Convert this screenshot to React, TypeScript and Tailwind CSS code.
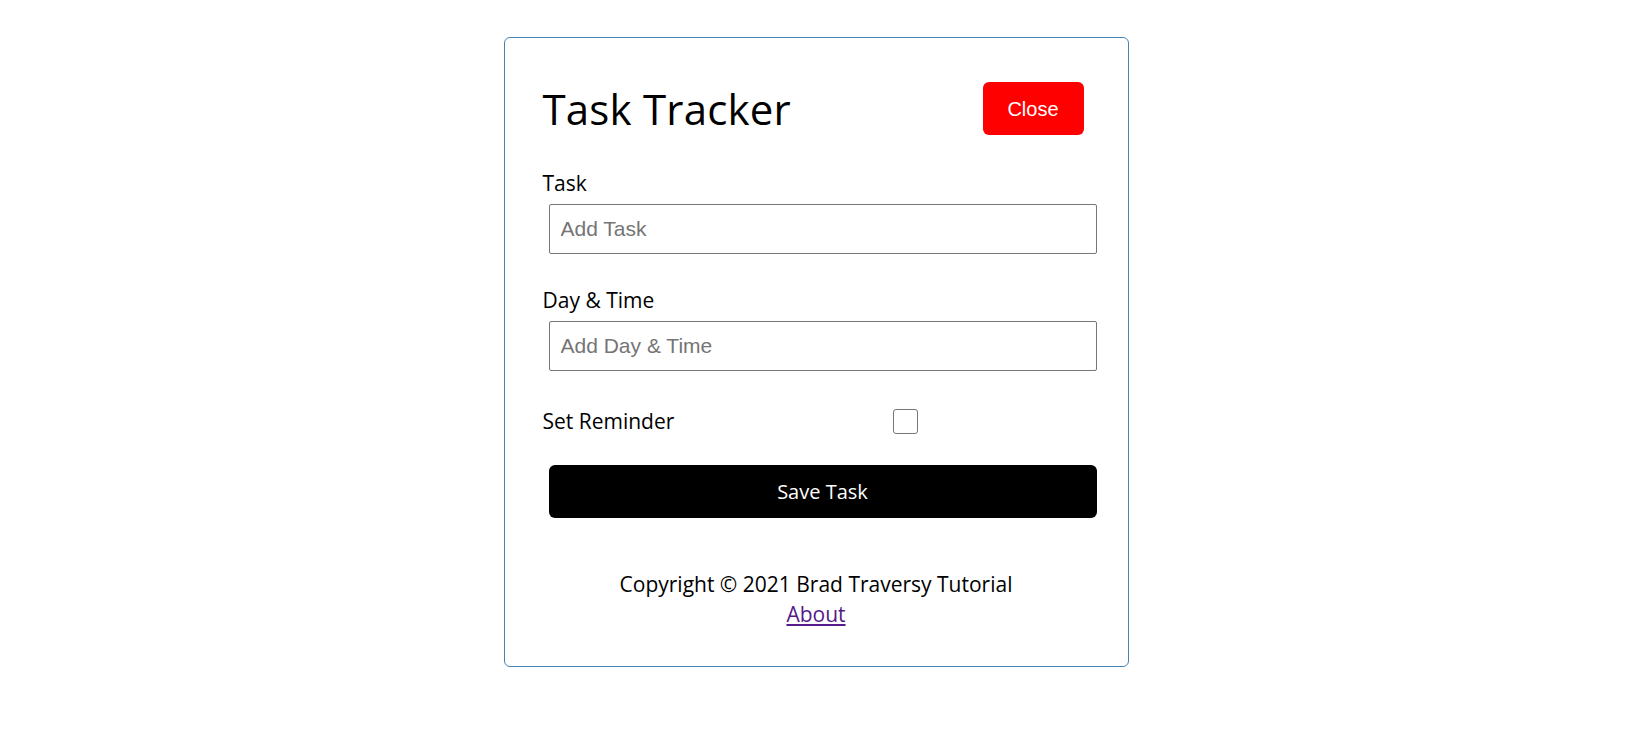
import React, { useState } from "react";

const App: React.FC = () => {
  const [text, setText] = useState("");
  const [day, setDay] = useState("");
  const [reminder, setReminder] = useState(false);

  return (
    <div className="min-h-screen bg-white flex justify-center pr-[20px] font-['Open_Sans',sans-serif] text-black">
      <div className="mt-[37px] mb-[30px] w-[625px] self-start rounded-[6px] border border-[#4682b4] px-[38px] pt-[38px] pb-[37px]">
        <header className="flex items-center justify-between h-[65px] mb-[27px]">
          <h1 className="text-[42px] leading-[60px] font-normal tracking-[0.2px]">Task Tracker</h1>
          <button className="mx-[6px] h-[53px] w-[101px] rounded-[6px] bg-[#ff0000] text-white text-[20px] font-['Liberation_Sans',Arial,sans-serif]">
            Close
          </button>
        </header>

        <form onSubmit={(e) => e.preventDefault()}>
          <div className="mb-[31px]">
            <label className="block text-[21px] leading-[30px]">Task</label>
            <input
              type="text"
              placeholder="Add Task"
              value={text}
              onChange={(e) => setText(e.target.value)}
              className="mt-[6px] ml-[6px] block w-[548px] h-[50px] rounded-[2px] border border-[#767676] px-[11px] text-[21px] font-['Liberation_Sans',Arial,sans-serif] placeholder:text-[#757575] focus:outline-none"
            />
          </div>
          <div className="mb-[31px]">
            <label className="block text-[21px] leading-[30px]">Day &amp; Time</label>
            <input
              type="text"
              placeholder="Add Day & Time"
              value={day}
              onChange={(e) => setDay(e.target.value)}
              className="mt-[6px] ml-[6px] block w-[548px] h-[50px] rounded-[2px] border border-[#767676] px-[11px] text-[21px] font-['Liberation_Sans',Arial,sans-serif] placeholder:text-[#757575] focus:outline-none"
            />
          </div>
          <div className="flex items-center h-[38px] mb-[25px]">
            <label className="flex-1 text-[21px] leading-[30px]">Set Reminder</label>
            <div className="flex-[2] flex justify-center mx-[6px]">
              <input
                type="checkbox"
                checked={reminder}
                onChange={(e) => setReminder(e.target.checked)}
                className="appearance-none w-[25px] h-[25px] rounded-[3px] border-[1.5px] border-[#767676] bg-white checked:bg-[#0075ff] checked:border-[#0075ff]"
              />
            </div>
          </div>
          <button
            type="submit"
            className="ml-[6px] block w-[548px] h-[53px] rounded-[6px] bg-black text-white text-[20px]"
          >
            Save Task
          </button>
        </form>

        <footer className="mt-[51px] text-center text-[21px] leading-[30px]">
          <p>Copyright &copy; 2021 Brad Traversy Tutorial</p>
          <a href="#about" className="underline text-[#551a8b]">
            About
          </a>
        </footer>
      </div>
    </div>
  );
};

export default App;
